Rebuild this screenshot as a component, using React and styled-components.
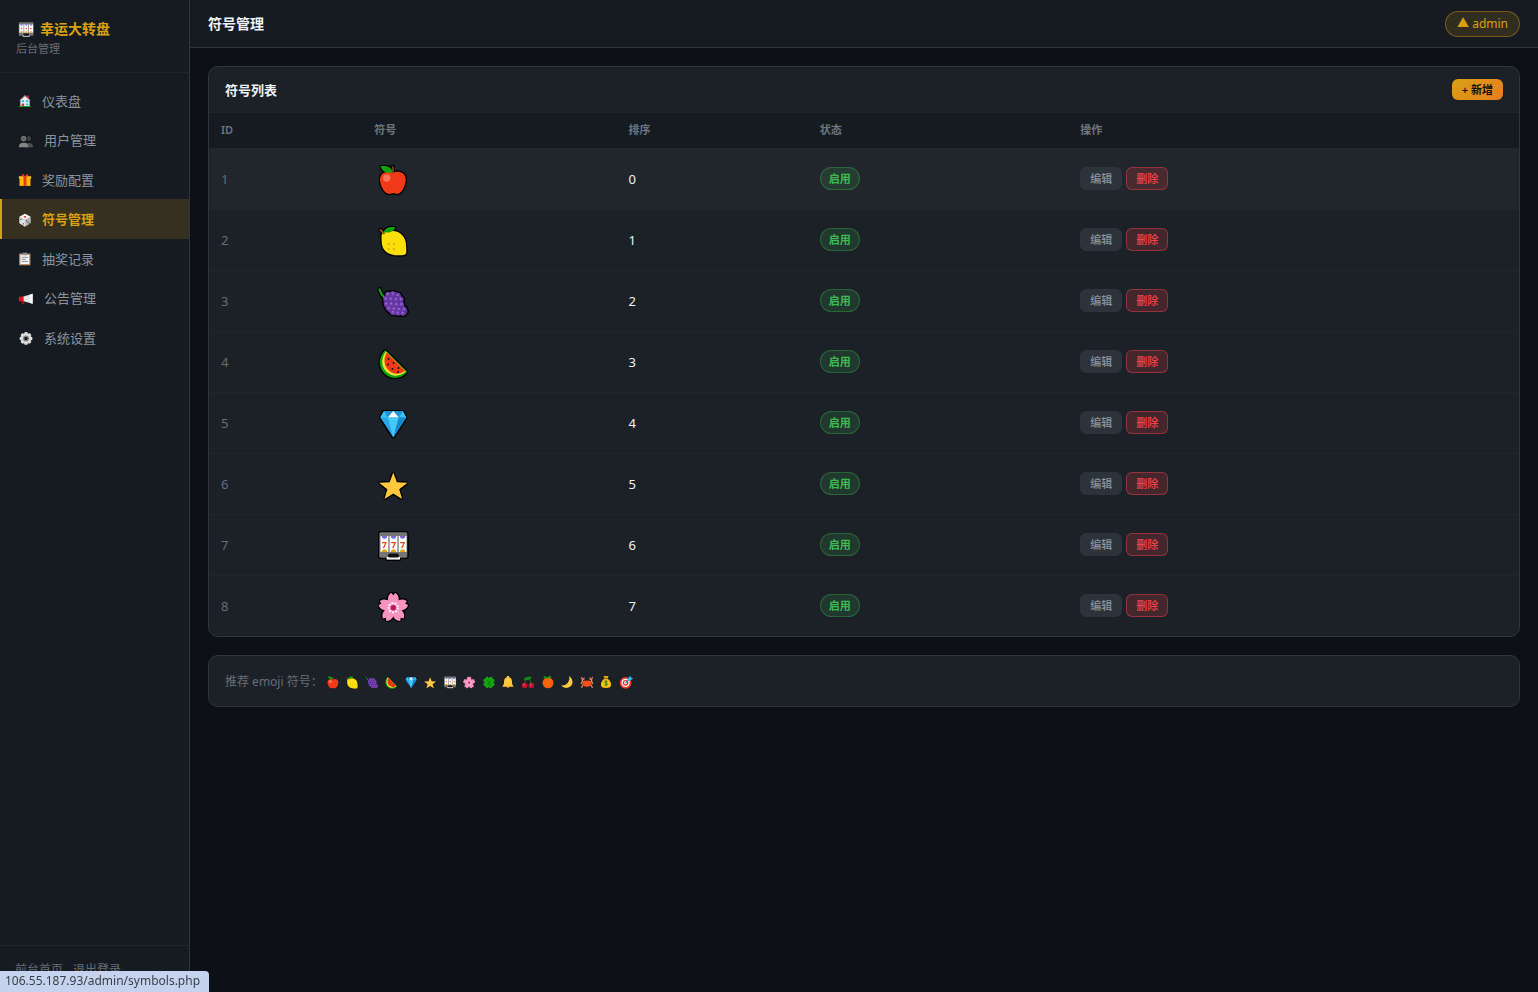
import React from 'react';
import styled, { createGlobalStyle, css } from 'styled-components';

const c = {
  page: '#0d1017',
  panel: '#161b22',
  card: '#1c2128',
  hover: '#21262d',
  line: '#21262d',
  edge: '#30363d',
  text: '#f0f3f6',
  soft: '#8b949e',
  dim: '#666d76',
  gold: '#d9a014',
};

const Global = createGlobalStyle`
  * { box-sizing: border-box; }
  body {
    margin: 0;
    background: ${c.page};
    color: ${c.text};
    font: 13px/1.5 "Noto Sans", "Noto Sans CJK SC", sans-serif;
  }
  button { font-family: inherit; cursor: pointer; }
  a { color: inherit; text-decoration: none; }
`;

/* ---------- emoji drawings, all on a 38 x 38 grid ---------- */

const grapes = [
  [14, 12.5], [19, 12], [24, 13.5], [12, 17], [17, 17], [22, 17.5], [27, 17.5],
  [12.5, 22], [17.5, 22], [22.5, 22.5], [27.5, 22.5], [15, 26.5], [20, 27],
  [25, 27.5], [30, 27.5], [19, 30.5], [24, 31], [29, 31.2],
];

const petals = [0, 72, 144, 216, 288];

const reels = [6.5, 15.6, 24.7];

const slotBody = (
  <>
    <rect x="5.3" y="6.2" width="28" height="25.5" rx="1.5" fill="#757575" />
    <rect x="12.7" y="31" width="13.3" height="2.6" fill="#f2f2f2" />
    <rect x="14" y="27.6" width="11" height="4" rx="1.8" fill="#111" />
    {reels.map((x) => (
      <g key={x}>
        <rect x={x} y="10" width="7.8" height="16" fill="#fff" />
        <path d={`M${x + 1.2} 10h5.4a2.7 2.7 0 0 1-5.4 0z`} fill="#7b68d8" />
        <path d={`M${x + 1.2} 26h5.4a2.7 2.7 0 0 0-5.4 0z`} fill="#e0a91c" />
      </g>
    ))}
  </>
);

const art = {
  apple: (
    <>
      <path d="M19 13c3-2.500 12.700-2.200 12.700 6.500 0 6-4 14.500-8.500 14.500-1.700 0-2.600-.9-4-.9s-2.300.9-4 .9C10.500 34 6 25.500 6 19.500 6 10.800 16 10.500 19 13z" fill="#f03a17" />
      <path d="M19 13.500V6.200" stroke="#8b4a20" strokeWidth="1.600" fill="none" />
      <path d="M6.500 6.200c6-.8 11.300.5 12 6.200-5.500 1-10.500-.5-12-6.200z" fill="#13a10e" />
      <circle cx="12.700" cy="18" r="3.700" fill="#f9745c" />
    </>
  ),
  lemon: (
    <>
      <path d="M8 13c2-2.600 6-3 10.500-3C26 10 32 16 32 24c0 3 .8 6.500 0 8.500s-4.500 1.800-8.500 1.800C14 34.300 7.700 29 7.700 21c0-3-.6-6.200.3-8z" fill="#fbdf0b" />
      <path d="M6 8.500l4.500 4.500" stroke="#9a5a2c" strokeWidth="1.800" />
      <path d="M9.500 11c2.500-5 7.500-5.500 12-4.500-2 4.500-6.500 6-12 4.500z" fill="#13a10e" />
      {[[14.7, 23], [20, 23], [14.7, 28], [20, 28]].map(([x, y]) => (
        <circle key={`${x}-${y}`} cx={x} cy={y} r="1.100" fill="#d9ae05" />
      ))}
    </>
  ),
  grapes: (
    <>
      <path d="M5.500 7.500c1 3 1.500 5.500 5 8" stroke="#16a016" strokeWidth="2.200" strokeLinecap="round" fill="none" />
      <path d="M12 12c3-4 13-3 16 3 2 4 0 7 3 10 4 3 3 7-1 8H20c-6-2-10-7-10.500-13 0-3 .5-6 2.500-8z" fill="#5b2d90" />
      {grapes.map(([x, y]) => (
        <g key={`${x}-${y}`}>
          <circle cx={x} cy={y} r="2.700" fill="#6a3aa5" />
          <circle cx={x - 0.3} cy={y - 0.4} r="1.100" fill="#9a6bd2" />
        </g>
      ))}
    </>
  ),
  melon: (
    <>
      <path d="M11.300 7l22 21.800C27.500 36.500 17.500 36.700 11 31 3.500 24.500 4.500 13.500 11.300 7z" fill="#13a10e" />
      <path d="M12 8.500L31.700 28.600C26.500 34 18 34 12.600 29 6.500 23 7 14.500 12 8.500z" fill="#f5e03a" />
      <path d="M12.800 9.500l18 18.300c-4.600 4-11.500 3.800-16-.3C9.500 22.500 9.300 15.500 12.800 9.500z" fill="#f03a17" />
      {[[14.5, 16], [14, 21.5], [19.5, 20], [18.5, 26], [24.500, 25], [24, 29]].map(([x, y]) => (
        <circle key={`${x}-${y}`} cx={x} cy={y} r="1" fill="#141414" />
      ))}
    </>
  ),
  diamond: (
    <>
      <path d="M10 7h18.700L32.300 13.500 19.300 33.500 6.300 13.500z" fill="#26a7ea" />
      <path d="M10 7l-3.700 6.500h7.500z" fill="#3cc3f3" />
      <path d="M28.700 7l3.600 6.500h-7.500z" fill="#3cc3f3" />
      <path d="M10 7h9.300l-5.500 6.500zM28.700 7h-9.400l5.500 6.500z" fill="#1e93d6" />
      <path d="M19.300 7l5.500 6.500h-11z" fill="#fff" />
      <path d="M13.800 13.500h11l-5.500 20z" fill="#46c9f7" />
      <path d="M24.800 13.500h7.500l-13 20z" fill="#1a86cc" />
    </>
  ),
  star: (
    <path d="M19.300 7.600l3.600 9.700 10.700.5-8.400 6.500 2.900 9.700-8.800-5.600-8.800 5.600 2.900-9.700L5 17.800l10.700-.5z" fill="#ffc83d" />
  ),
  slot: (
    <>
      {slotBody}
      {reels.map((x) => (
        <text key={x} x={x + 3.9} y="21.500" textAnchor="middle" fontSize="9" fontWeight="700" fill="#e8401c">7</text>
      ))}
    </>
  ),
  slotMini: (
    <>
      {slotBody}
      {reels.map((x) => (
        <circle key={x} cx={x + 3.9} cy="18" r="1.500" fill="#e8401c" />
      ))}
    </>
  ),
  flower: (
    <>
      {petals.map((a) => (
        <path key={a} transform={`rotate(${a} 19.300 20.700)`} d="M19.300 21.500c-5-4-6.700-9-4.300-13.500l2.200-2.200 2.100 2.400 2.100-2.400L23.600 8c2.400 4.500.7 9.500-4.300 13.500z" fill="#f893bf" />
      ))}
      <circle cx="19.300" cy="20.700" r="4.600" fill="none" stroke="#fff" strokeWidth="2" strokeDasharray="1.800 1.400" />
      <circle cx="19.300" cy="20.700" r="2.700" fill="#c2185b" />
    </>
  ),
  clover: (
    <>
      {[45, 135, 225, 315].map((a) => (
        <path key={a} transform={`rotate(${a} 19 20)`} d="M19 20c-6-3-8.500-7-7-11.500 1-2.800 5-3 7-.8 2-2.200 6-2 7 .8 1.500 4.500-1 8.500-7 11.500z" fill="#16a812" />
      ))}
      <path d="M13 14l12 12M25 14L13 26" stroke="#0a6a0a" strokeWidth="1.500" />
      <path d="M19 20c0 6 0 10 2 13" stroke="#0d7a0d" strokeWidth="2" fill="none" />
    </>
  ),
  bell: (
    <>
      <circle cx="19" cy="31" r="3" fill="#b8741a" />
      <path d="M19 5c2 0 3 1 3 2.600 5 1.600 6.500 6 6.500 11.400 0 5 1 7 4 11.500H5.500c3-4.500 4-6.500 4-11.500C9.500 13.600 11 9.200 16 7.600 16 6 17 5 19 5z" fill="#ffc83d" />
    </>
  ),
  cherry: (
    <>
      <path d="M11 24c0-8 5-14 10-16 2 6 5 10 6 16" stroke="#12800f" strokeWidth="2.200" fill="none" />
      <path d="M9 14C10 7 17 5 28 7c-2 7-11 9-19 7z" fill="#138a10" />
      <circle cx="11" cy="27.500" r="6.500" fill="#c5122f" />
      <circle cx="27" cy="27.500" r="6.500" fill="#c5122f" />
      <circle cx="9.500" cy="25.500" r="1.600" fill="#ef6a7c" />
      <circle cx="25.500" cy="25.500" r="1.600" fill="#ef6a7c" />
    </>
  ),
  orange: (
    <>
      <circle cx="19" cy="21" r="13" fill="#f7630c" />
      <path d="M17 10c-3-5-7-5-9-4 1 4 4 6 9 4zM18 10c1-5 5-6 9-5-1 4-4 6-9 5z" fill="#13a10e" />
    </>
  ),
  moon: <path d="M24 5c14 10 9 28-7 28-5 0-9-2-12-6 12 2 22-8 19-22z" fill="#ffc83d" />,
  crab: (
    <>
      <path d="M8 17l-3 7M9 26l-3 7M30 17l3 7M29 26l3 7M10 19L7 13M28 19l3-6" stroke="#e58a62" strokeWidth="2.800" />
      <ellipse cx="19" cy="22.500" rx="11" ry="7.500" fill="#f4511e" />
      <path d="M5 6c0 5 1 8 5 8s4-4 2-7l-2 4zM33 6c0 5-1 8-5 8s-4-4-2-7l2 4z" fill="#f28b60" />
      <circle cx="16" cy="14" r="1.800" fill="#222" />
      <circle cx="22" cy="14" r="1.800" fill="#222" />
    </>
  ),
  money: (
    <>
      <path d="M13 5h12l-2.500 6h-7z" fill="#e8a90d" />
      <path d="M15 11h8c5 4 8 9 8 14 0 6-4 8.500-12 8.500S7 31 7 25c0-5 3-10 8-14z" fill="#f9c116" />
      <path d="M14 11h10" stroke="#8b5a10" strokeWidth="2" />
      <path d="M22.500 18c-3-2-7-1-6.500 1.500s6.500 1.500 6.500 4.500-4 3.500-7 1.500M19 15v14" stroke="#12800f" strokeWidth="2" fill="none" />
    </>
  ),
  target: (
    <>
      <circle cx="18" cy="21" r="14" fill="#e8382c" />
      <circle cx="18" cy="21" r="10" fill="#fff" />
      <circle cx="18" cy="21" r="7" fill="#e8382c" />
      <circle cx="18" cy="21" r="3.500" fill="#fff" />
      <path d="M18 21L31 8" stroke="#1479b8" strokeWidth="2.500" />
      <path d="M23 11l6-7 1.500 4.500L36 10l-7 6h-6z" fill="#35b5f0" />
    </>
  ),
  home: (
    <>
      <path d="M8 17L19 7l11 10v15H8z" fill="#f3f3f3" />
      <path d="M6.500 17.500L19 6l12.500 11.500" stroke="#f0a49a" strokeWidth="1.800" fill="none" />
      <path d="M24 6h4v7l-4-4z" fill="#d13438" />
      <path d="M11 17h6v5h-6zM21 17h6v5h-6zM21 25h6v4h-6z" fill="#35b2e8" />
      <path d="M11 25h6v7h-6z" fill="#d13438" />
      <path d="M5 32h28" stroke="#16a016" strokeWidth="2.600" />
    </>
  ),
  users: (
    <>
      <circle cx="25" cy="14" r="6.500" fill="#3c3f44" stroke="#0a0a0a" strokeWidth="2" />
      <path d="M17 32c0-7 4-9 9-9s8 3 8 9z" fill="#4c4f53" />
      <circle cx="14" cy="14" r="7" fill="#7b7b7b" stroke="#0a0a0a" strokeWidth="2" />
      <circle cx="14" cy="14" r="3" fill="#55585c" />
      <path d="M4 32c0-7 4-9.500 10-9.500S24 25 24 32z" fill="#858585" />
    </>
  ),
  gift: (
    <>
      <path d="M6 15h26v18H6z" fill="#ffb900" />
      <path d="M4.500 10h29v6h-29z" fill="#ffc524" />
      <path d="M15.500 10h7v23h-7z" fill="#e8391b" />
      <path d="M19 11c-5 0-9-2-8-5s6-1 8 5c2-6 7-8 8-5s-3 5-8 5z" fill="#e8391b" />
    </>
  ),
  dice: (
    <>
      <path d="M19 4l13.500 7L19 19 5.500 11z" fill="#fff" />
      <path d="M5.500 11L19 19v16L5.500 27z" fill="#e1e1e1" />
      <path d="M32.500 11L19 19v16l13.500-8z" fill="#bdbdbd" />
      <ellipse cx="19" cy="11.500" rx="3.200" ry="2" fill="#e0281e" />
      <circle cx="9.500" cy="17.500" r="1.500" fill="#333" />
      <circle cx="15" cy="28" r="1.500" fill="#333" />
      <circle cx="23" cy="21" r="1.500" fill="#333" />
      <circle cx="26" cy="24" r="1.500" fill="#333" />
      <circle cx="29" cy="27" r="1.500" fill="#333" />
    </>
  ),
  clipboard: (
    <>
      <path d="M5 6h27v28H5z" fill="#b98a68" />
      <path d="M8 9h21v22H8z" fill="#f4f4f4" />
      <path d="M13 4h11v6H13z" fill="#8f9296" />
      <path d="M11 15h15M11 20h10M11 25h15" stroke="#7e8489" strokeWidth="2" />
    </>
  ),
  horn: (
    <>
      <path d="M12 14L33 8v21l-21-6z" fill="#e6e6e6" />
      <path d="M28 9.500l5-1.500v21l-5-1.500z" fill="#fafafa" />
      <path d="M4 14h10v10H4z" fill="#e81224" />
      <path d="M9 24h5l2 6h-4z" fill="#b50e1c" />
    </>
  ),
  gear: (
    <>
      <circle cx="19" cy="20" r="11" fill="#dedede" />
      {[0, 45, 90, 135].map((a) => (
        <rect key={a} x="15.500" y="6.500" width="7" height="27" rx="2.500" transform={`rotate(${a} 19 20)`} fill="#dedede" />
      ))}
      <circle cx="19" cy="20" r="6.500" fill="#8b8b8b" />
      <circle cx="19" cy="20" r="3.600" fill="#17191d" />
    </>
  ),
};

const Drawing = styled.svg`
  display: block;
  flex: none;
  overflow: visible;
  width: ${(p) => p.$size}px;
  height: ${(p) => p.$size}px;
  ${(p) => p.$outlined && css`
    filter: drop-shadow(1px 0 0 #000) drop-shadow(-1px 0 0 #000)
      drop-shadow(0 1px 0 #000) drop-shadow(0 -1px 0 #000);
  `}
`;

const Emoji = ({ name, size = 16, outlined = false }) => (
  <Drawing viewBox="0 0 38 38" $size={size} $outlined={outlined} aria-hidden="true">
    {art[name]}
  </Drawing>
);

/* ---------- page frame ---------- */

const Layout = styled.div`
  display: flex;
  min-height: 100vh;
`;

const Sidebar = styled.aside`
  position: sticky;
  top: 0;
  display: flex;
  flex: none;
  flex-direction: column;
  width: 190px;
  height: 100vh;
  background: ${c.panel};
  border-right: 1px solid ${c.edge};
`;

const Brand = styled.div`
  padding: 18px 16px 14px;
  border-bottom: 1px solid ${c.line};
`;

const BrandName = styled.div`
  display: flex;
  align-items: center;
  gap: 4px;
  color: ${c.gold};
  font-size: 14px;
  font-weight: 700;
`;

const BrandNote = styled.div`
  margin-top: 2px;
  color: ${c.dim};
  font-size: 11px;
`;

const Nav = styled.nav`
  flex: 1;
  padding: 8px 0;
`;

const NavLink = styled.a`
  display: flex;
  align-items: center;
  gap: 9px;
  padding: 11px 15px 9px;
  border-left: 2px solid transparent;
  color: ${c.soft};

  &[aria-current='page'] {
    background: rgba(217, 160, 20, 0.16);
    border-left-color: ${c.gold};
    color: ${c.gold};
    font-weight: 600;
  }
`;

const SidebarFooter = styled.div`
  display: flex;
  gap: 10px;
  padding: 15px 15px 13px;
  border-top: 1px solid ${c.line};
  color: ${c.dim};
  font-size: 12px;
`;

const Main = styled.div`
  flex: 1;
  min-width: 0;
`;

const Topbar = styled.header`
  display: flex;
  align-items: center;
  justify-content: space-between;
  height: 48px;
  padding: 0 18px;
  background: ${c.panel};
  border-bottom: 1px solid ${c.edge};
`;

const PageTitle = styled.h1`
  margin: 0;
  font-size: 14px;
  font-weight: 700;
`;

const UserPill = styled.span`
  padding: 2px 11px;
  background: rgba(217, 160, 20, 0.15);
  border: 1px solid rgba(217, 160, 20, 0.4);
  border-radius: 13px;
  color: ${c.gold};
  font-size: 12px;
  line-height: 20px;
`;

const Content = styled.main`
  display: grid;
  gap: 18px;
  padding: 18px;
`;

/* ---------- cards, table, controls ---------- */

const Card = styled.section`
  overflow: hidden;
  background: ${c.card};
  border: 1px solid ${c.edge};
  border-radius: 10px;
`;

const CardHeader = styled.div`
  display: flex;
  align-items: center;
  justify-content: space-between;
  padding: 12px 16px;
  border-bottom: 1px solid ${c.line};
`;

const CardTitle = styled.h2`
  margin: 0;
  font-size: 13px;
  font-weight: 700;
  line-height: 20px;
`;

const AddButton = styled.button`
  padding: 2px 10px;
  background: linear-gradient(135deg, #d9a014, #e67e22);
  border: 0;
  border-radius: 6px;
  color: #0d1117;
  font-size: 11px;
  font-weight: 600;
  line-height: 17px;
`;

const Table = styled.table`
  width: 100%;
  border-spacing: 0;
  table-layout: fixed;
`;

const Column = styled.col`
  width: ${(p) => p.$share};
`;

const HeadCell = styled.th`
  height: 36px;
  padding: 0 12px;
  background: ${c.panel};
  border-bottom: 1px solid ${c.line};
  color: #6e757e;
  font-size: 11px;
  font-weight: 600;
  text-align: left;
`;

const Row = styled.tr`
  background: ${(p) => (p.$lit ? c.hover : 'transparent')};
`;

const Cell = styled.td`
  height: 61px;
  padding: 0 12px;
  border-bottom: 1px solid ${c.line};
  color: ${c.text};
  vertical-align: middle;

  ${Row}:last-child & {
    height: 60px;
    border-bottom: 0;
  }
`;

const NumberCell = styled(Cell)`
  padding-top: 1px;
  color: ${(p) => (p.$dim ? c.dim : c.text)};
`;

const ControlCell = styled(Cell)`
  padding-bottom: 1px;
`;

const Status = styled.span`
  display: block;
  width: fit-content;
  padding: 2px 8px;
  background: rgba(63, 185, 80, 0.15);
  border: 1px solid rgba(63, 185, 80, 0.35);
  border-radius: 12px;
  color: #3fb950;
  font-size: 11px;
  font-weight: 600;
  line-height: 17px;
`;

const Actions = styled.div`
  display: flex;
  gap: 4px;
`;

const RowButton = styled.button`
  padding: 2px 9px;
  background: ${(p) => (p.$danger ? 'rgba(248, 65, 73, 0.18)' : '#2d333b')};
  border: 1px solid ${(p) => (p.$danger ? 'rgba(248, 65, 73, 0.45)' : '#2d333b')};
  border-radius: 6px;
  color: ${(p) => (p.$danger ? '#f84149' : c.soft)};
  font-size: 11px;
  font-weight: 500;
  line-height: 17px;
`;

const Tips = styled.div`
  display: flex;
  align-items: center;
  gap: 2px;
  padding: 17px 16px 15px;
  color: ${c.dim};
  font-size: 12px;
  line-height: 18px;
`;

const TipIcons = styled.div`
  display: flex;
  justify-content: space-between;
  width: 309px;
`;

const LinkPreview = styled.div`
  position: fixed;
  bottom: 0;
  left: 0;
  padding: 0 9px 1px 5px;
  background: #c5d3ee;
  border-top-right-radius: 4px;
  color: #3a3f47;
  font-size: 12px;
  line-height: 20px;
`;

const menu = [
  { icon: 'home', label: '仪表盘' },
  { icon: 'users', label: '用户管理', wide: true },
  { icon: 'gift', label: '奖励配置' },
  { icon: 'dice', label: '符号管理', current: true },
  { icon: 'clipboard', label: '抽奖记录' },
  { icon: 'horn', label: '公告管理', wide: true },
  { icon: 'gear', label: '系统设置', wide: true },
];

const columns = [
  { label: 'ID', share: '11.7%' },
  { label: '符号', share: '19.4%' },
  { label: '排序', share: '14.6%' },
  { label: '状态', share: '19.9%' },
  { label: '操作', share: 'auto' },
];

const symbols = ['apple', 'lemon', 'grapes', 'melon', 'diamond', 'star', 'slot', 'flower'];

const suggested = [
  'apple', 'lemon', 'grapes', 'melon', 'diamond', 'star', 'slotMini', 'flower',
  'clover', 'bell', 'cherry', 'orange', 'moon', 'crab', 'money', 'target',
];

export default function App() {
  return (
    <>
      <Global />
      <Layout>
        <Sidebar>
          <Brand>
            <BrandName>
              <Emoji name="slotMini" size={20} />
              幸运大转盘
            </BrandName>
            <BrandNote>后台管理</BrandNote>
          </Brand>
          <Nav>
            {menu.map((item) => (
              <NavLink key={item.label} href="#" aria-current={item.current ? 'page' : undefined}>
                <Emoji name={item.icon} size={item.wide ? 18 : 16} />
                {item.label}
              </NavLink>
            ))}
          </Nav>
          <SidebarFooter>
            <a href="#">前台首页</a>
            <a href="#">退出登录</a>
          </SidebarFooter>
        </Sidebar>

        <Main>
          <Topbar>
            <PageTitle>符号管理</PageTitle>
            <UserPill>▲ admin</UserPill>
          </Topbar>
          <Content>
            <Card>
              <CardHeader>
                <CardTitle>符号列表</CardTitle>
                <AddButton type="button">+ 新增</AddButton>
              </CardHeader>
              <Table>
                <colgroup>
                  {columns.map((col) => (
                    <Column key={col.label} $share={col.share} />
                  ))}
                </colgroup>
                <thead>
                  <tr>
                    {columns.map((col) => (
                      <HeadCell key={col.label} scope="col">{col.label}</HeadCell>
                    ))}
                  </tr>
                </thead>
                <tbody>
                  {symbols.map((name, i) => (
                    <Row key={name} $lit={i === 0}>
                      <NumberCell $dim>{i + 1}</NumberCell>
                      <Cell><Emoji name={name} size={38} outlined /></Cell>
                      <NumberCell>{i}</NumberCell>
                      <ControlCell><Status>启用</Status></ControlCell>
                      <ControlCell>
                        <Actions>
                          <RowButton type="button">编辑</RowButton>
                          <RowButton type="button" $danger>删除</RowButton>
                        </Actions>
                      </ControlCell>
                    </Row>
                  ))}
                </tbody>
              </Table>
            </Card>
            <Card>
              <Tips>
                推荐 emoji 符号：
                <TipIcons>
                  {suggested.map((name) => (
                    <Emoji key={name} name={name} />
                  ))}
                </TipIcons>
              </Tips>
            </Card>
          </Content>
        </Main>
      </Layout>
      <LinkPreview>106.55.187.93/admin/symbols.php</LinkPreview>
    </>
  );
}
